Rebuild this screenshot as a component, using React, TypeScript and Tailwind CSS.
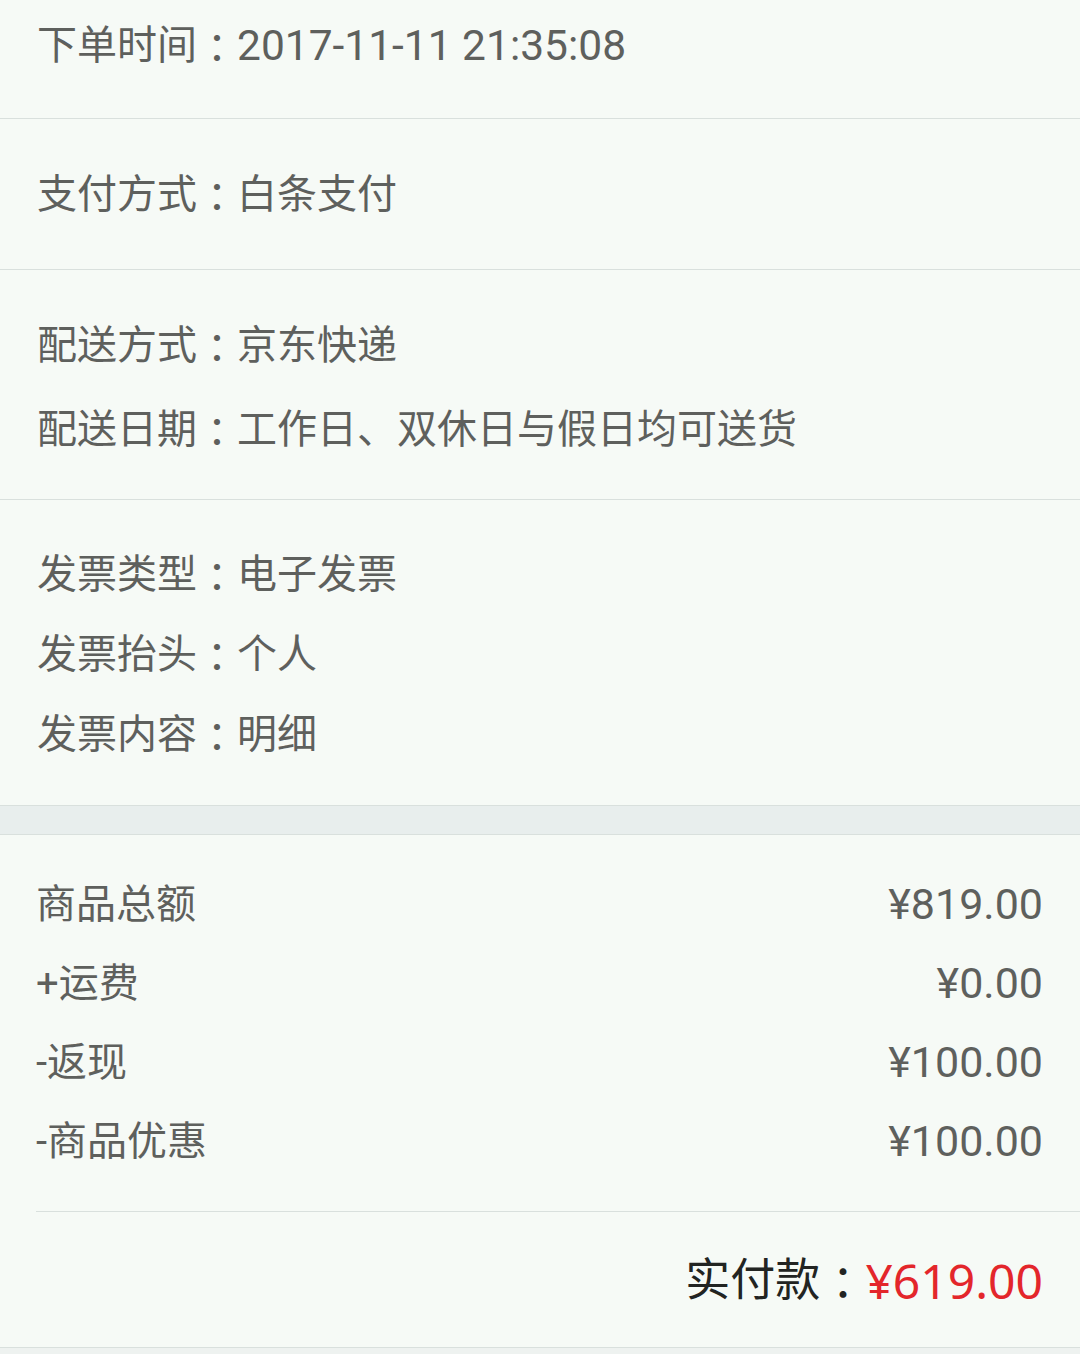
import React from "react";

const font = { fontFamily: '"Roboto", "Noto Sans CJK SC", sans-serif' };
const colonFont = { fontFamily: '"Noto Sans CJK TC", sans-serif' };

function Colon() {
  return <span style={colonFont}>：</span>;
}

function Row({ label, value, h = "h-[80px]", latin = false }: { label: string; value: string; h?: string; latin?: boolean }) {
  return (
    <div className={`flex items-center ${h} px-[37px] text-[40px] text-[#5e605d] whitespace-nowrap`}>
      <span>{label}</span>
      <Colon />
      <span className={latin ? "text-[42.5px]" : ""}>{value}</span>
    </div>
  );
}

function AmountRow({ label, value }: { label: string; value: string }) {
  return (
    <div className="flex items-center justify-between h-[79px] pl-[36px] pr-[37px] text-[40px] text-[#5e605d] whitespace-nowrap">
      <span>{label}</span>
      <span className="text-[43px]">{value}</span>
    </div>
  );
}

export default function App() {
  return (
    <div className="w-[1080px] h-[1354px] bg-[#f6faf6] overflow-hidden" style={font}>
      <div className="pt-[6px] pb-[32px] border-b border-[#d9e0dd]">
        <Row label="下单时间" value="2017-11-11 21:35:08" latin />
      </div>
      <div className="pt-[36px] pb-[34px] border-b border-[#d9e0dd]">
        <Row label="支付方式" value="白条支付" />
      </div>
      <div className="pt-[34px] pb-[27px] border-b border-[#d9e0dd]">
        <Row label="配送方式" value="京东快递" h="h-[84px]" />
        <Row label="配送日期" value="工作日、双休日与假日均可送货" h="h-[84px]" />
      </div>
      <div className="pt-[35px] pb-[30px] border-b border-[#d9e0dd]">
        <Row label="发票类型" value="电子发票" />
        <Row label="发票抬头" value="个人" />
        <Row label="发票内容" value="明细" />
      </div>
      <div className="h-[29px] bg-[#e8eeed] border-b border-[#d9e0dd]" />
      <div className="pt-[30px] pb-[30px]">
        <AmountRow label="商品总额" value="¥819.00" />
        <AmountRow label="+运费" value="¥0.00" />
        <AmountRow label="-返现" value="¥100.00" />
        <AmountRow label="-商品优惠" value="¥100.00" />
      </div>
      <div className="ml-[36px] border-t border-[#d9e0dd]" />
      <div className="pt-[29px] pb-[26px] border-b border-[#d9e0dd]">
        <div className="flex items-center justify-end h-[80px] pr-[37px] whitespace-nowrap">
          <span className="text-[45px] text-[#222422]">实付款</span>
          <span className="text-[45px] text-[#222422]" style={colonFont}>：</span>
          <span className="text-[48px] text-[#e3262b]" style={{ fontFamily: '"Noto Sans", "Noto Sans CJK SC", sans-serif' }}>¥619.00</span>
        </div>
      </div>
      <div className="h-[7px] bg-[#eef2f0]" />
    </div>
  );
}
